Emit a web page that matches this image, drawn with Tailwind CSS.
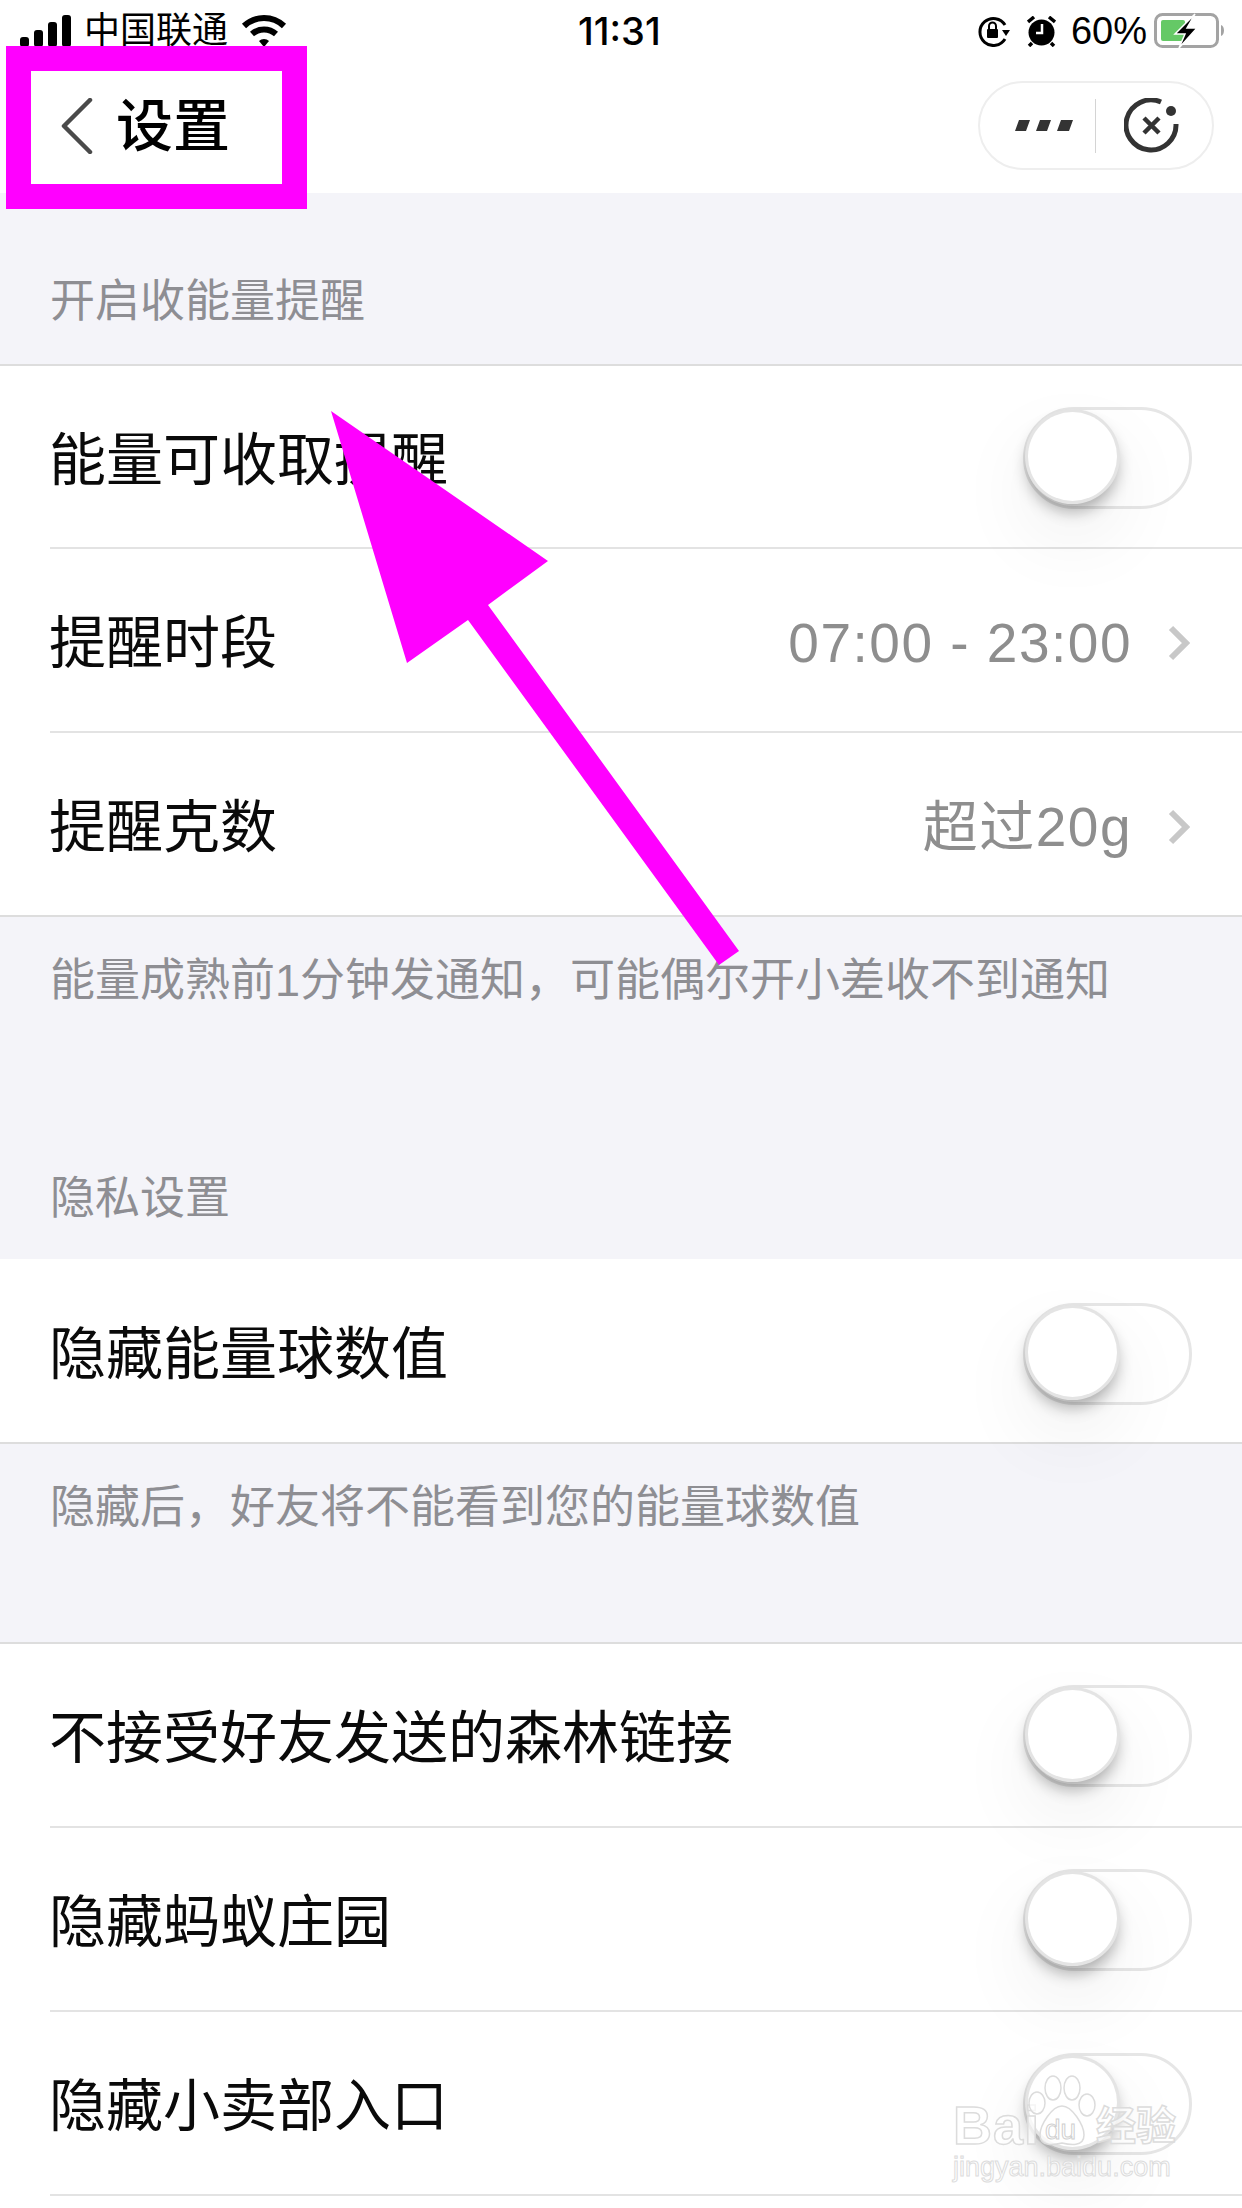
<!DOCTYPE html>
<html lang="zh-CN">
<head>
    <meta charset="UTF-8">
    <title>设置</title>
    <script src="https://cdn.jsdelivr.net/npm/@tailwindcss/browser@4"></script>
</head>
<body class="bg-[#f4f4f9] text-[#0a0a0a] [font-family:'Liberation_Sans','Noto_Sans_CJK_SC',sans-serif]">
<div class="relative w-[1242px] h-[2208px] overflow-hidden">

    <!-- status bar + nav -->
    <header class="h-[193px] bg-white flex flex-col">
        <div class="h-[62px] relative flex items-center justify-between pl-[20px] pr-[16px] text-black">
            <div class="flex items-center">
                <svg class="w-[52px] h-[32px]" viewBox="0 0 52 32" fill="#000">
                    <rect x="0" y="22" width="9" height="10" rx="3"/>
                    <rect x="14" y="15" width="9" height="17" rx="3"/>
                    <rect x="28" y="7" width="9" height="25" rx="3"/>
                    <rect x="42" y="0" width="9" height="32" rx="3"/>
                </svg>
                <span class="ml-[12px] text-[36px] leading-[44px]">中国联通</span>
                <svg class="ml-[13px] w-[46px] h-[33px]" viewBox="0 0 46 33" fill="none" stroke="#000" stroke-width="6">
                    <path d="M3 11 A29 29 0 0 1 43 11"/>
                    <path d="M11 19 A18 18 0 0 1 35 19"/>
                    <path d="M18 26 L23 32 L28 26 A7 7 0 0 0 18 26 Z" fill="#000" stroke="none"/>
                </svg>
            </div>
            <span class="absolute left-[578px] top-[11px] text-[38px] leading-[40px] font-medium [font-family:Inter,sans-serif]">11:31</span>
            <div class="flex items-center">
                <svg class="w-[33px] h-[31px]" viewBox="0 0 33 31" fill="none" stroke="#000" stroke-width="3">
                    <path d="M28 9 A13.5 13.5 0 1 0 28 23"/>
                    <path d="M25 14 L33 14 L29 20 Z" fill="#000" stroke="none"/>
                    <rect x="10" y="13" width="11" height="9" rx="1" fill="#000" stroke="none"/>
                    <path d="M12 13 V10 A3.5 3.5 0 0 1 19 10 V13" stroke-width="2"/>
                </svg>
                <svg class="ml-[17px] w-[29px] h-[31px]" viewBox="0 0 29 31">
                    <circle cx="14.5" cy="16.5" r="13" fill="#000"/>
                    <path d="M1 6 L7 1 M28 6 L22 1 M5 27 L2 30 M24 27 L27 30" stroke="#000" stroke-width="3.5"/>
                    <path d="M15 8 V17 H9" fill="none" stroke="#fff" stroke-width="2.5"/>
                </svg>
                <span class="ml-[15px] text-[38px] leading-[44px]">60%</span>
                <svg class="ml-[7px] w-[72px] h-[36px]" viewBox="0 0 72 36" fill="none">
                    <rect x="1.5" y="1.5" width="62" height="32" rx="7" stroke="#a3a3a3" stroke-width="3"/>
                    <rect x="7" y="7" width="24" height="21" rx="2" fill="#65c966"/>
                    <path d="M67 12 C71 13 71 22 67 23 Z" fill="#a3a3a3"/>
                    <path d="M41 1 L21 21 H31 L25 35 L43 15 H33 Z" fill="#000" stroke="#fff" stroke-width="1.5"/>
                </svg>
            </div>
        </div>
        <div class="flex-1 flex items-start justify-between pl-[61px] pr-[28px]">
            <div class="flex items-center mt-[36px]">
                <svg class="w-[32px] h-[56px]" viewBox="0 0 32 56" fill="none" stroke="#4a4a4a" stroke-width="4.5" stroke-linecap="round" stroke-linejoin="round">
                    <path d="M29 2 L3 28 L29 54"/>
                </svg>
                <h1 class="ml-[23px] text-[57px] leading-[56px] font-medium text-black">设置</h1>
            </div>
            <div class="mt-[19px] w-[236px] h-[89px] rounded-full border-2 border-[#eeeeee] flex items-center">
                <div class="flex-1 flex justify-center pl-[12px]">
                    <svg class="w-[58px] h-[11px]" viewBox="0 0 58 11" fill="#333">
                        <path d="M4 0 H15 L11 11 H0 Z M25 0 H36 L32 11 H21 Z M46 0 H58 L54 11 H42 Z"/>
                    </svg>
                </div>
                <div class="w-[1px] h-[54px] bg-[#d4d4d4]"></div>
                <div class="w-[116px] flex justify-center pr-[5px]">
                    <svg class="w-[56px] h-[56px]" viewBox="0 0 56 56" fill="none" stroke="#333" stroke-width="5">
                        <path d="M52 26 A25 25 0 1 1 37 4"/>
                        <circle cx="47" cy="13" r="5" fill="#333" stroke="none"/>
                        <path d="M20 20 L35 35 M35 20 L20 35" stroke-width="4.5"/>
                    </svg>
                </div>
            </div>
        </div>
    </header>

    <!-- 开启收能量提醒 -->
    <div class="h-[171px] pl-[50px] pt-[86px] text-[45px] leading-[46px] text-[#8e8e93]">开启收能量提醒</div>
    <section class="bg-white border-y-2 border-[#dddddd]">
        <div class="h-[183px] ml-[50px] border-b-2 border-[#e3e3e3] flex items-center justify-between pr-[50px]">
            <span class="-ml-[1px] mt-[8px] text-[57px]">能量可收取提醒</span>
            <div class="relative mt-[2px] w-[169px] h-[102px] rounded-full border-[3px] border-[#e6e6e6]">
                <div class="absolute left-[2px] top-[2px] w-[89px] h-[89px] rounded-full bg-white shadow-[0_0_0_3px_#e4e4e4,0_10px_16px_rgba(0,0,0,0.32),0_34px_80px_rgba(0,0,0,0.08)]"></div>
            </div>
        </div>
        <div class="h-[184px] ml-[50px] border-b-2 border-[#e3e3e3] flex items-center justify-between pr-[50px]">
            <span class="-ml-[1px] mt-[8px] text-[57px]">提醒时段</span>
            <div class="flex items-center mt-[6px]">
                <span class="text-[55px] tracking-[1.5px] text-[#8e8e8e]">07:00 - 23:00</span>
                <svg class="ml-[36px] mr-[2px] w-[22px] h-[36px]" viewBox="0 0 22 36" fill="none" stroke="#c8c8c8" stroke-width="6"><path d="M3 3 L18 18 L3 33"/></svg>
            </div>
        </div>
        <div class="h-[182px] ml-[50px] flex items-center justify-between pr-[50px]">
            <span class="-ml-[1px] mt-[8px] text-[57px]">提醒克数</span>
            <div class="flex items-center mt-[6px]">
                <span class="text-[55px] tracking-[1.5px] text-[#8e8e8e]">超过20g</span>
                <svg class="ml-[36px] mr-[2px] w-[22px] h-[36px]" viewBox="0 0 22 36" fill="none" stroke="#c8c8c8" stroke-width="6"><path d="M3 3 L18 18 L3 33"/></svg>
            </div>
        </div>
    </section>
    <p class="pl-[50px] pt-[41px] text-[45px] leading-[46px] text-[#8e8e93]">能量成熟前1分钟发通知，可能偶尔开小差收不到通知</p>

    <!-- 隐私设置 -->
    <div class="pl-[50px] pt-[172px] h-[255px] text-[45px] leading-[46px] text-[#8e8e93]">隐私设置</div>
    <section class="bg-white border-b-2 border-[#dddddd]">
        <div class="h-[183px] ml-[50px] flex items-center justify-between pr-[50px]">
            <span class="-ml-[1px] mt-[8px] text-[57px]">隐藏能量球数值</span>
            <div class="relative mt-[6px] w-[169px] h-[102px] rounded-full border-[3px] border-[#e6e6e6]">
                <div class="absolute left-[2px] top-[2px] w-[89px] h-[89px] rounded-full bg-white shadow-[0_0_0_3px_#e4e4e4,0_10px_16px_rgba(0,0,0,0.32),0_34px_80px_rgba(0,0,0,0.08)]"></div>
            </div>
        </div>
    </section>
    <p class="h-[198px] pl-[50px] pt-[41px] text-[45px] leading-[46px] text-[#8e8e93]">隐藏后，好友将不能看到您的能量球数值</p>

    <section class="bg-white border-t-2 border-[#dddddd] h-[600px]">
        <div class="h-[184px] ml-[50px] border-b-2 border-[#e3e3e3] flex items-center justify-between pr-[50px]">
            <span class="-ml-[1px] mt-[8px] text-[57px]">不接受好友发送的森林链接</span>
            <div class="relative mt-[2px] w-[169px] h-[102px] rounded-full border-[3px] border-[#e6e6e6]">
                <div class="absolute left-[2px] top-[2px] w-[89px] h-[89px] rounded-full bg-white shadow-[0_0_0_3px_#e4e4e4,0_10px_16px_rgba(0,0,0,0.32),0_34px_80px_rgba(0,0,0,0.08)]"></div>
            </div>
        </div>
        <div class="h-[184px] ml-[50px] border-b-2 border-[#e3e3e3] flex items-center justify-between pr-[50px]">
            <span class="-ml-[1px] mt-[8px] text-[57px]">隐藏蚂蚁庄园</span>
            <div class="relative mt-[2px] w-[169px] h-[102px] rounded-full border-[3px] border-[#e6e6e6]">
                <div class="absolute left-[2px] top-[2px] w-[89px] h-[89px] rounded-full bg-white shadow-[0_0_0_3px_#e4e4e4,0_10px_16px_rgba(0,0,0,0.32),0_34px_80px_rgba(0,0,0,0.08)]"></div>
            </div>
        </div>
        <div class="h-[184px] ml-[50px] border-b-2 border-[#e3e3e3] flex items-center justify-between pr-[50px]">
            <span class="-ml-[1px] mt-[8px] text-[57px]">隐藏小卖部入口</span>
            <div class="relative mt-[2px] w-[169px] h-[102px] rounded-full border-[3px] border-[#e6e6e6]">
                <div class="absolute left-[2px] top-[2px] w-[89px] h-[89px] rounded-full bg-white shadow-[0_0_0_3px_#e4e4e4,0_10px_16px_rgba(0,0,0,0.32),0_34px_80px_rgba(0,0,0,0.08)]"></div>
            </div>
        </div>
    </section>

    <!-- annotation drawn over the screenshot -->
    <div class="absolute left-[6px] top-[46px] w-[301px] h-[163px] border-[25px] border-[#ff00ff]"></div>
    <svg class="absolute left-0 top-0 w-[1242px] h-[2208px] pointer-events-none" viewBox="0 0 1242 2208" fill="#ff00ff">
        <path d="M331 411 L548 561 L488 605 L739 951 L719 965 L468 620 L407 663 Z"/>
    </svg>

    <!-- watermark -->
    <div class="absolute left-[953px] top-[2075px] w-[225px] h-[108px] text-white/70 [-webkit-text-stroke:1.5px_#dcdcdc]">
        <span class="absolute left-0 top-[22px] text-[54px] leading-[56px] font-bold tracking-[1px]">Bai</span>
        <svg class="absolute left-[75px] top-0 w-[68px] h-[72px]" viewBox="0 0 68 72" fill="#ffffff" fill-opacity="0.7" stroke="#dcdcdc" stroke-width="1.5">
            <ellipse cx="9" cy="28" rx="8" ry="11"/>
            <ellipse cx="25" cy="13" rx="8" ry="12"/>
            <ellipse cx="44" cy="13" rx="8" ry="12"/>
            <ellipse cx="59" cy="30" rx="8" ry="11"/>
            <path d="M34 31 C44 31 56 50 56 60 C56 72 42 70 34 68 C26 70 12 72 12 60 C12 50 24 31 34 31 Z"/>
        </svg>
        <span class="absolute left-[92px] top-[40px] text-[28px] leading-[30px] text-white/0 [-webkit-text-stroke:1px_#cfcfcf]">du</span>
        <span class="absolute left-[143px] top-[30px] text-[40px] leading-[42px] font-bold">经验</span>
        <span class="absolute left-0 top-[76px] text-[27px] leading-[32px] [-webkit-text-stroke:1px_#dcdcdc]">jingyan.baidu.com</span>
    </div>
</div>
</body>
</html>
